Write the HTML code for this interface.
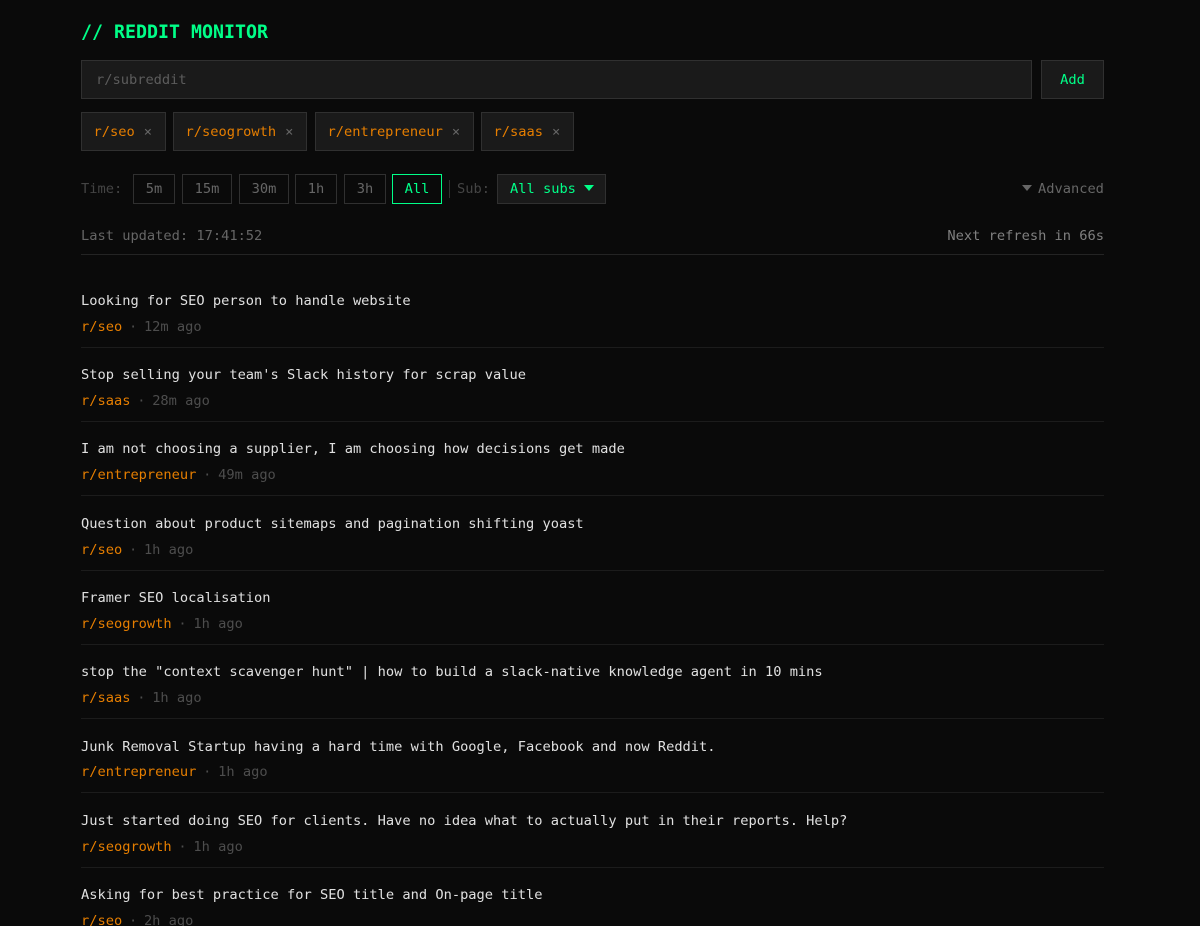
<!DOCTYPE html>
<html><head><meta charset="utf-8"><style>
html,body{margin:0;padding:0;background:#0a0a0a;width:1200px;height:926px;overflow:hidden}
body{font-family:"DejaVu Sans Mono","Liberation Mono",monospace;font-size:13.7px;line-height:18px}
#w{position:absolute;left:0;top:0;width:1200px;height:926px;overflow:hidden;filter:blur(.3px)}
.a{position:absolute;white-space:pre;box-sizing:border-box}
.b{position:absolute;box-sizing:border-box;border:1px solid #303030;text-align:center;white-space:pre;color:#666}
.tag{position:absolute;box-sizing:border-box;height:39px;top:112px;background:#1a1a1a;border:1px solid #303030;color:#e67e00;line-height:39px;padding-left:11.5px;white-space:pre}
.tag i{font-style:normal;color:#666;margin-left:9px}
.t{position:absolute;left:81px;color:#e0e0e0;white-space:pre}
.m{position:absolute;left:81px;color:#4d4d4d;white-space:pre}
.m b{font-weight:normal;color:#e67e00}
.m u{text-decoration:none;margin:0 -1.5px}
.l{position:absolute;left:81px;width:1023px;height:1px;background:#1c1c1c}
</style></head><body><div id="w">
<div class="a" style="left:81px;top:22px;font-size:18.27px;line-height:22px;font-weight:bold;color:#00ff88">// REDDIT MONITOR</div>
<div class="a" style="left:81px;top:60px;width:951px;height:39px;background:#1a1a1a;border:1px solid #303030;color:#5c5c5c;padding-left:14px;line-height:39px">r/subreddit</div>
<div class="a" style="left:1041px;top:60px;width:63px;height:39px;background:#1a1a1a;border:1px solid #303030;color:#00ff88;text-align:center;line-height:39px">Add</div>
<div class="tag" style="left:81px;width:85px">r/seo<i>×</i></div>
<div class="tag" style="left:173px;width:134px">r/seogrowth<i>×</i></div>
<div class="tag" style="left:315px;width:159px">r/entrepreneur<i>×</i></div>
<div class="tag" style="left:481px;width:93px">r/saas<i>×</i></div>
<div class="a" style="left:81px;top:180px;color:#444">Time:</div>
<div class="b" style="left:133px;top:174px;width:42px;height:30px;line-height:28px">5m</div>
<div class="b" style="left:182px;top:174px;width:50px;height:30px;line-height:28px">15m</div>
<div class="b" style="left:239px;top:174px;width:50px;height:30px;line-height:28px">30m</div>
<div class="b" style="left:295px;top:174px;width:42px;height:30px;line-height:28px">1h</div>
<div class="b" style="left:344px;top:174px;width:42px;height:30px;line-height:28px">3h</div>
<div class="b" style="left:392px;top:174px;width:50px;height:30px;line-height:28px;border-color:#00ff88;color:#00ff88">All</div>
<div class="a" style="left:449px;top:180px;width:1px;height:18px;background:#303030"></div>
<div class="a" style="left:457px;top:180px;color:#444">Sub:</div>
<div class="a" style="left:497px;top:174px;width:109px;height:30px;background:#1a1a1a;border:1px solid #303030;color:#00ff88;line-height:28px;padding-left:12px">All subs</div>
<svg class="a" style="left:584px;top:185px" width="10" height="7"><path d="M0 0H10L5 6Z" fill="#00ff88"/></svg>
<svg class="a" style="left:1022px;top:185px" width="10" height="7"><path d="M0 0H10L5 6Z" fill="#666"/></svg>
<div class="a" style="left:1038px;top:180px;color:#666">Advanced</div>
<div class="a" style="left:81px;top:227px;color:#666">Last updated: 17:41:52</div>
<div class="a" style="right:96px;top:227px;color:#808080">Next refresh in 66s</div>
<div class="l" style="top:254px;background:#242424"></div>

<div class="t" style="top:292px">Looking for SEO person to handle website</div>
<div class="m" style="top:318px"><b>r/seo</b> <u>·</u> 12m ago</div>
<div class="l" style="top:347px"></div>
<div class="t" style="top:366px">Stop selling your team's Slack history for scrap value</div>
<div class="m" style="top:392px"><b>r/saas</b> <u>·</u> 28m ago</div>
<div class="l" style="top:421px"></div>
<div class="t" style="top:440px">I am not choosing a supplier, I am choosing how decisions get made</div>
<div class="m" style="top:466px"><b>r/entrepreneur</b> <u>·</u> 49m ago</div>
<div class="l" style="top:495px"></div>
<div class="t" style="top:515px">Question about product sitemaps and pagination shifting yoast</div>
<div class="m" style="top:541px"><b>r/seo</b> <u>·</u> 1h ago</div>
<div class="l" style="top:570px"></div>
<div class="t" style="top:589px">Framer SEO localisation</div>
<div class="m" style="top:615px"><b>r/seogrowth</b> <u>·</u> 1h ago</div>
<div class="l" style="top:644px"></div>
<div class="t" style="top:663px">stop the "context scavenger hunt" | how to build a slack-native knowledge agent in 10 mins</div>
<div class="m" style="top:689px"><b>r/saas</b> <u>·</u> 1h ago</div>
<div class="l" style="top:718px"></div>
<div class="t" style="top:738px">Junk Removal Startup having a hard time with Google, Facebook and now Reddit.</div>
<div class="m" style="top:763px"><b>r/entrepreneur</b> <u>·</u> 1h ago</div>
<div class="l" style="top:792px"></div>
<div class="t" style="top:812px">Just started doing SEO for clients. Have no idea what to actually put in their reports. Help?</div>
<div class="m" style="top:838px"><b>r/seogrowth</b> <u>·</u> 1h ago</div>
<div class="l" style="top:867px"></div>
<div class="t" style="top:886px">Asking for best practice for SEO title and On-page title</div>
<div class="m" style="top:912px"><b>r/seo</b> <u>·</u> 2h ago</div>
</div></body></html>
